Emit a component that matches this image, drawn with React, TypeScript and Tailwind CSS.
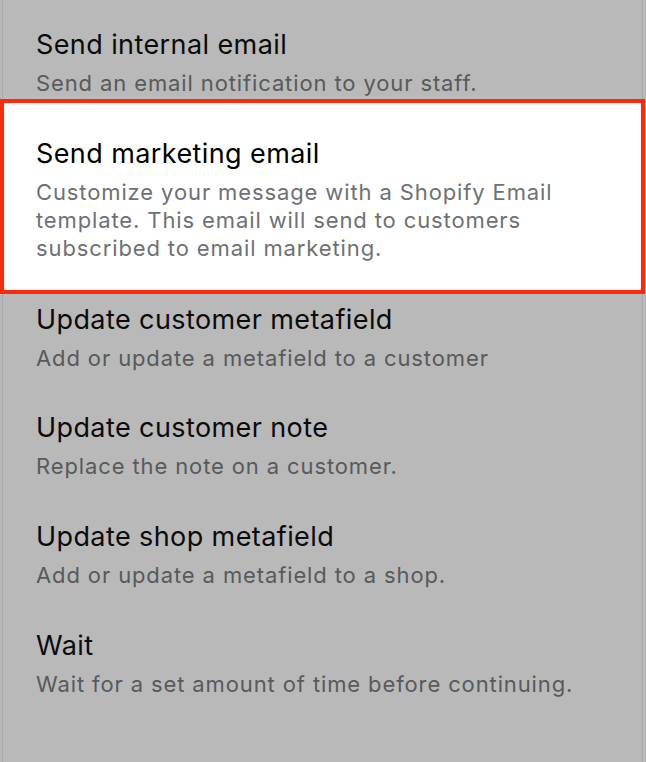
const items = [
  {
    title: "Update customer metafield",
    description: "Add or update a metafield to a customer",
    spacing: "pt-[12px]",
  },
  {
    title: "Update customer note",
    description: "Replace the note on a customer.",
    spacing: "pt-[42px]",
  },
  {
    title: "Update shop metafield",
    description: "Add or update a metafield to a shop.",
    spacing: "pt-[43px]",
  },
  {
    title: "Wait",
    description: "Wait for a set amount of time before continuing.",
    spacing: "pt-[43px]",
  },
];

function ActionItem({
  title,
  description,
  className,
}: {
  title: string;
  description: string;
  className?: string;
}) {
  return (
    <div className={`px-[33px] ${className ?? ""}`}>
      <div className="text-[27px] leading-[28px] tracking-[0.015em] text-[#0b0b0b]">
        {title}
      </div>
      <div className="mt-[10px] text-[22px] leading-[28px] tracking-[0.04em] text-[#585a5b]">
        {description}
      </div>
    </div>
  );
}

export default function App() {
  return (
    <div className="w-[646px] h-[762px] bg-[#b9b9b9] overflow-hidden font-['Inter',sans-serif]">
      <div className="ml-[2px] w-[641px] h-full border-x border-[#a9a9a9] pt-[31px]">
        <ActionItem
          title="Send internal email"
          description="Send an email notification to your staff."
          className="pb-[2px]"
        />

        <div className="-ml-[3px] w-[645px] border-4 border-[#fb2a0a] bg-white px-[32px] pt-[37px] pb-[28px] shadow-[inset_0_0_3px_rgba(0,0,0,0.15)]">
          <div className="text-[27px] leading-[28px] tracking-[0.015em] text-black">
            Send marketing email
          </div>
          <div className="mt-[10px] text-[22px] leading-[28px] tracking-[0.04em] text-[#6d7175]">
            Customize your message with a Shopify Email template. This email
            will send to customers subscribed to email marketing.
          </div>
        </div>

        {items.map((item) => (
          <ActionItem
            key={item.title}
            title={item.title}
            description={item.description}
            className={item.spacing}
          />
        ))}
      </div>
    </div>
  );
}
